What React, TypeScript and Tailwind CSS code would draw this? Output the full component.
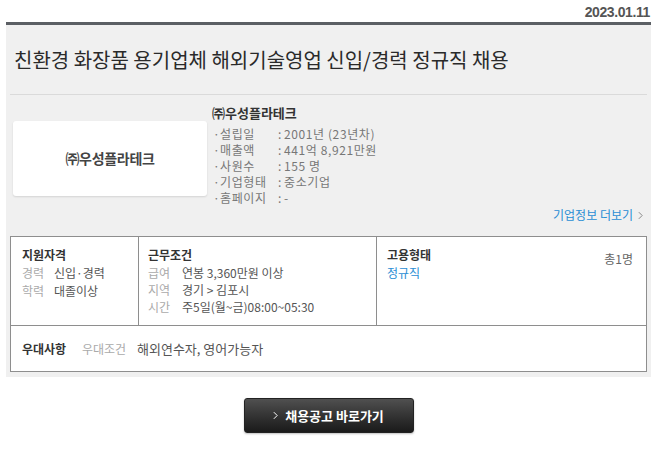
import React from "react";

const F = "font-['Noto_Sans_CJK_KR','Noto_Sans',sans-serif]";

function Chevron({ className }: { className?: string }) {
  return (
    <svg viewBox="0 0 6 10" className={className} fill="none">
      <polyline points="1,1 5,5 1,9" stroke="currentColor" strokeWidth="1.2" />
    </svg>
  );
}

const info: [string, string][] = [
  ["설립일", "2001년 (23년차)"],
  ["매출액", "441억 8,921만원"],
  ["사원수", "155 명"],
  ["기업형태", "중소기업"],
  ["홈페이지", "-"],
];

export default function App() {
  return (
    <div className={`w-[657px] h-[475px] bg-white ${F} text-[12px] text-[#555]`}>
      <div className="h-[22px] flex items-end justify-end pb-[3px] pr-[7px]">
        <span className="font-['Liberation_Sans',sans-serif] font-bold text-[14px] leading-[14px] text-[#555] tracking-[-0.4px]">
          2023.01.11
        </span>
      </div>
      <div className="mx-[6px]">
        <div className="h-[3px] bg-[#5b5f64]" />
        <div className="bg-[#f0f0f0] px-[4px] pb-[5px]">
          <div className="h-[69px] flex items-center pl-[4px]">
            <h1 className="text-[20px] leading-[24px] text-[#2a2a2a] font-normal">
              친환경 화장품 용기업체 해외기술영업 신입/경력 정규직 채용
            </h1>
          </div>
          <div className="border-t border-[#dadada]" />
          <div className="flex pt-[10px]">
            <div className="ml-[3px] mt-[16px] w-[194px] h-[75px] bg-white rounded-[3px] shadow-[0_1px_2px_rgba(0,0,0,0.12)] flex items-center justify-center">
              <span className="text-[14px] font-bold text-[#444] tracking-[-0.3px]">㈜우성플라테크</span>
            </div>
            <div className="ml-[5px] flex-1 flex flex-col">
              <div className="text-[13px] leading-[16px] font-bold text-[#333]">㈜우성플라테크</div>
              <div className="mt-[5px] flex flex-col text-[#777] text-[12px] tracking-[0.6px]">
                {info.map(([k, v]) => (
                  <div key={k} className="flex leading-[16px]">
                    <span className="w-[8px] pl-[1px]">·</span>
                    <span className="w-[58px]">{k}</span>
                    <span className="w-[6px]">:</span>
                    <span>{v}</span>
                  </div>
                ))}
              </div>
              <div className="mt-[1px] flex justify-end items-center pr-[4px] leading-[16px] text-[#2a8ed4]">
                <span>기업정보 더보기</span>
                <Chevron className="ml-[5px] w-[5px] h-[9px] text-[#888]" />
              </div>
            </div>
          </div>
          <div className="mt-[13px] border border-[#8e8e8e] bg-white">
            <div className="flex h-[88px]">
              <div className="w-[128px] border-r border-[#8e8e8e] pl-[11px] pt-[10px]">
                <div className="text-[12px] leading-[16px] font-bold text-[#333]">지원자격</div>
                <div className="mt-[1px] leading-[18px]">
                  <div className="flex"><span className="w-[32px] text-[#aaa]">경력</span><span className="text-[#555]">신입·경력</span></div>
                  <div className="flex"><span className="w-[32px] text-[#aaa]">학력</span><span className="text-[#555]">대졸이상</span></div>
                </div>
              </div>
              <div className="w-[238px] border-r border-[#8e8e8e] pl-[9px] pt-[10px]">
                <div className="text-[12px] leading-[16px] font-bold text-[#333]">근무조건</div>
                <div className="mt-[1px] leading-[17px]">
                  <div className="flex"><span className="w-[34px] text-[#aaa]">급여</span><span className="text-[#555]">연봉 3,360만원 이상</span></div>
                  <div className="flex"><span className="w-[34px] text-[#aaa]">지역</span><span className="text-[#555]">경기 &gt; 김포시</span></div>
                  <div className="flex"><span className="w-[34px] text-[#aaa]">시간</span><span className="text-[#555]">주5일(월~금)08:00~05:30</span></div>
                </div>
              </div>
              <div className="flex-1 pl-[10px] pr-[13px] pt-[10px] flex justify-between items-start">
                <div>
                  <div className="text-[12px] leading-[16px] font-bold text-[#333]">고용형태</div>
                  <div className="mt-[1px] leading-[18px] text-[#2a8ed4]">정규직</div>
                </div>
                <div className="mt-[4px] leading-[16px] text-[#666]">총1명</div>
              </div>
            </div>
            <div className="h-[46px] border-t border-[#8e8e8e] flex items-center pl-[11px]">
              <span className="w-[60px] text-[12px] font-bold text-[#333]">우대사항</span>
              <span className="w-[55px] text-[#aaa]">우대조건</span>
              <span className="text-[#555] text-[13px]">해외연수자, 영어가능자</span>
            </div>
          </div>
        </div>
      </div>
      <div className="mt-[21px] flex justify-center">
        <button className="w-[170px] h-[35px] rounded-[3px] bg-gradient-to-b from-[#505050] to-[#1a1a1a] border border-[#222] shadow-[0_1px_2px_rgba(0,0,0,0.25)] flex items-center justify-center text-white">
          <Chevron className="w-[5px] h-[9px] text-white mr-[7px]" />
          <span className="text-[13px] font-bold leading-[16px]">채용공고 바로가기</span>
        </button>
      </div>
    </div>
  );
}
